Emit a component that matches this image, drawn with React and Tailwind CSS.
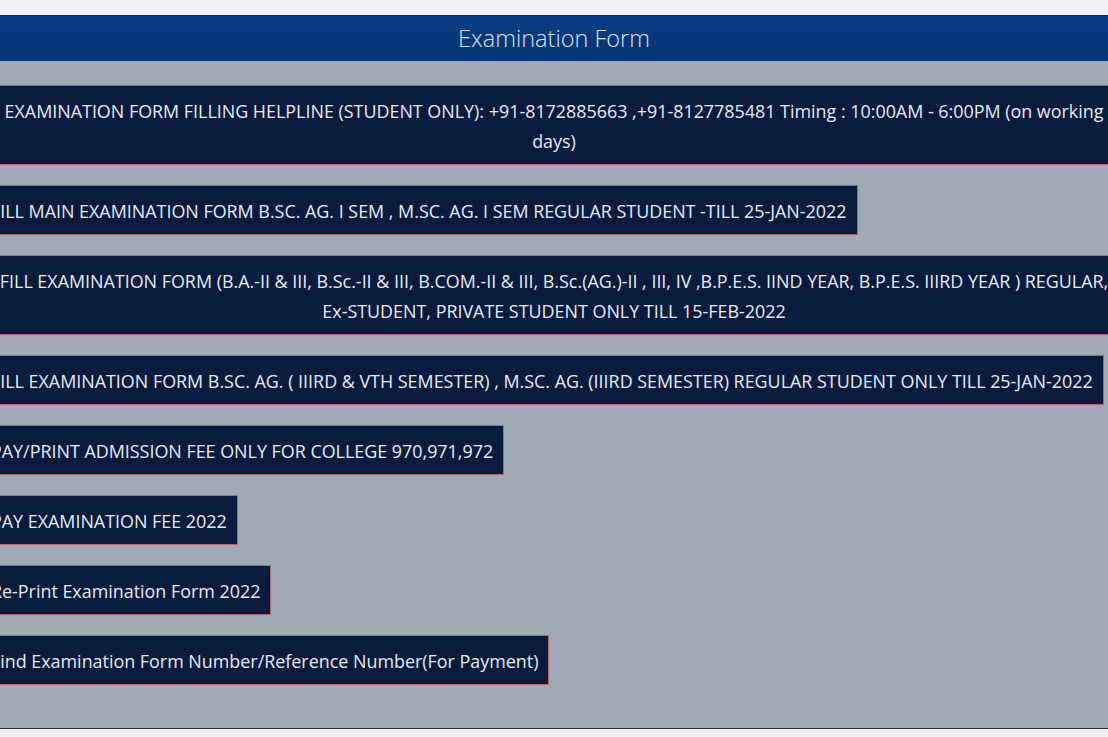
const LINKS = [
  "EXAMINATION FORM FILLING HELPLINE (STUDENT ONLY): +91-8172885663 ,+91-8127785481 Timing : 10:00AM - 6:00PM (on working days)",
  "FILL MAIN EXAMINATION FORM B.SC. AG. I SEM , M.SC. AG. I SEM REGULAR STUDENT -TILL 25-JAN-2022",
  "FILL EXAMINATION FORM (B.A.-II & III, B.Sc.-II & III, B.COM.-II & III, B.Sc.(AG.)-II , III, IV ,B.P.E.S. IIND YEAR, B.P.E.S. IIIRD YEAR ) REGULAR, Ex\u2011STUDENT, PRIVATE STUDENT ONLY TILL 15-FEB-2022",
  "FILL EXAMINATION FORM B.SC. AG. ( IIIRD & VTH SEMESTER) , M.SC. AG. (IIIRD SEMESTER) REGULAR STUDENT ONLY TILL 25-JAN-2022",
  "PAY/PRINT ADMISSION FEE ONLY FOR COLLEGE 970,971,972",
  "PAY EXAMINATION FEE 2022",
  "Re-Print Examination Form 2022",
  "Find Examination Form Number/Reference Number(For Payment)",
];

export default function App() {
  return (
    <div
      className="w-[1108px] h-[737px] overflow-hidden bg-[#eef0f5]"
      style={{ fontFamily: '"Open Sans", "Noto Sans", sans-serif' }}
    >
      <div className="h-[15px]" />
      <div className="-ml-5 w-[1148px]">
        {/* Header */}
        <div className="h-[46px] flex items-center justify-center border-t border-[#1c2a44] bg-gradient-to-b from-[#083d85] to-[#063372]">
          <h2 className="text-[23.5px] font-light text-[#dbe4f0]">
            Examination Form
          </h2>
        </div>

        {/* Body */}
        <div className="bg-[#a1a9b5] pt-6 h-[668px] border-b border-[#2a3242]">
          {LINKS.map((label, i) => (
            <div key={i} className="mb-5">
              <a
                href="#"
                className="inline-block max-w-full px-[10px] pt-[10px] pb-[8px] text-center text-[17.9px] leading-[30px] text-[#e4ebf4] bg-[#0a1c3e] border border-[#b5616d]"
              >
                {label}
              </a>
            </div>
          ))}
        </div>
      </div>
    </div>
  );
}
